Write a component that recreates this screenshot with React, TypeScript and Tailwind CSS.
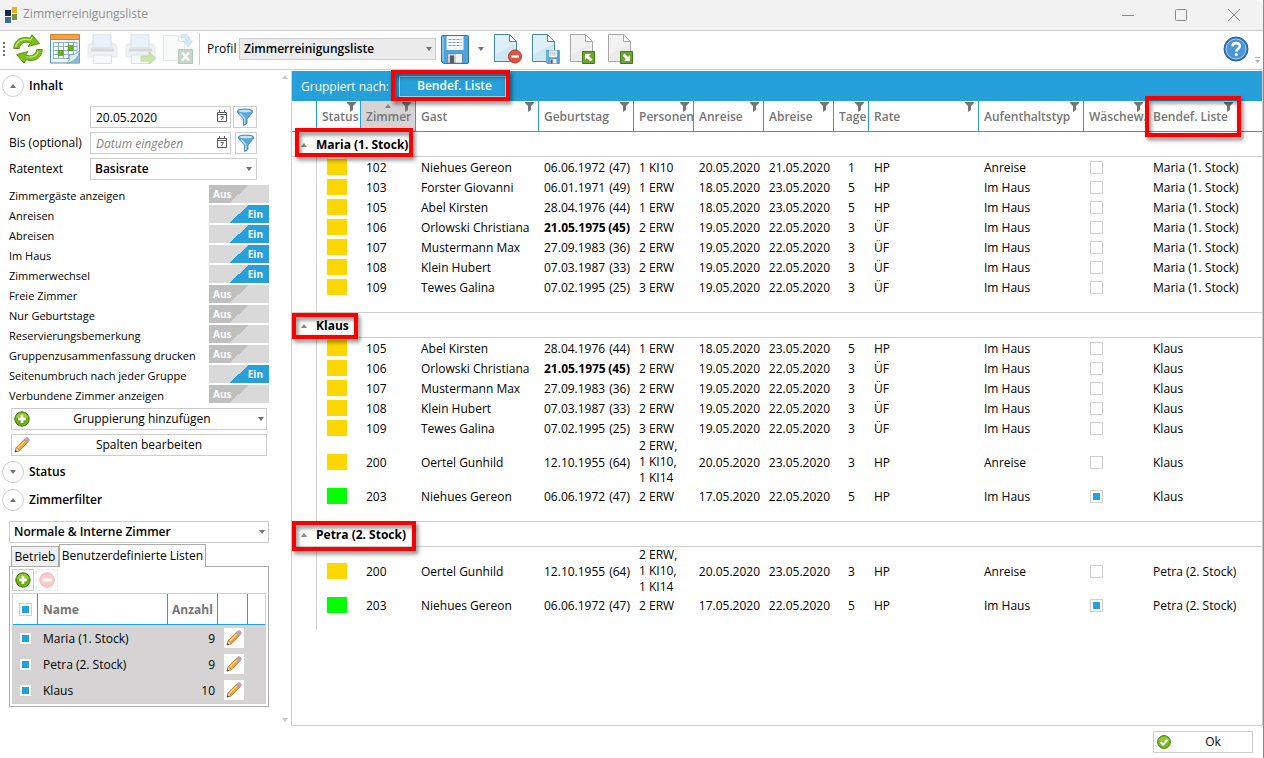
import type { ReactNode } from "react";

type Row = {
  room: string;
  guest: string;
  birth: string;
  age: string;
  persons: string;
  from: string;
  to: string;
  days: number;
  rate: string;
  type: string;
  green?: boolean;
  birthday?: boolean;
};

const oertel: Row = { room: "200", guest: "Oertel Gunhild", birth: "12.10.1955", age: "(64)", persons: "2 ERW,\n1 KI10,\n1 KI14", from: "20.05.2020", to: "23.05.2020", days: 3, rate: "HP", type: "Anreise" };
const niehues203: Row = { room: "203", guest: "Niehues Gereon", birth: "06.06.1972", age: "(47)", persons: "2 ERW", from: "17.05.2020", to: "22.05.2020", days: 5, rate: "HP", type: "Im Haus", green: true };
const shared: Row[] = [
  { room: "105", guest: "Abel Kirsten", birth: "28.04.1976", age: "(44)", persons: "1 ERW", from: "18.05.2020", to: "23.05.2020", days: 5, rate: "HP", type: "Im Haus" },
  { room: "106", guest: "Orlowski Christiana", birth: "21.05.1975", age: "(45)", persons: "2 ERW", from: "19.05.2020", to: "22.05.2020", days: 3, rate: "ÜF", type: "Im Haus", birthday: true },
  { room: "107", guest: "Mustermann Max", birth: "27.09.1983", age: "(36)", persons: "2 ERW", from: "19.05.2020", to: "22.05.2020", days: 3, rate: "ÜF", type: "Im Haus" },
  { room: "108", guest: "Klein Hubert", birth: "07.03.1987", age: "(33)", persons: "2 ERW", from: "19.05.2020", to: "22.05.2020", days: 3, rate: "ÜF", type: "Im Haus" },
  { room: "109", guest: "Tewes Galina", birth: "07.02.1995", age: "(25)", persons: "3 ERW", from: "19.05.2020", to: "22.05.2020", days: 3, rate: "ÜF", type: "Im Haus" },
];

const groups = [
  {
    name: "Maria (1. Stock)",
    marker: "left-[3px] -top-1 w-[118px] h-[29px]",
    rows: [
      { room: "102", guest: "Niehues Gereon", birth: "06.06.1972", age: "(47)", persons: "1 KI10", from: "20.05.2020", to: "21.05.2020", days: 1, rate: "HP", type: "Anreise" },
      { room: "103", guest: "Forster Giovanni", birth: "06.01.1971", age: "(49)", persons: "1 ERW", from: "18.05.2020", to: "23.05.2020", days: 5, rate: "HP", type: "Im Haus" },
      ...shared,
    ] as Row[],
  },
  { name: "Klaus", marker: "left-0 top-0 w-[66px] h-[26px]", rows: [...shared, oertel, niehues203] },
  { name: "Petra (2. Stock)", marker: "left-0 -top-px w-[124px] h-[30px]", rows: [oertel, niehues203] },
];

const columns = [
  { label: "", col: "w-[25px]" },
  { label: "Status", col: "w-[44px]" },
  { label: "Zimmer", col: "w-[55px]" },
  { label: "Gast", col: "w-[123px]" },
  { label: "Geburtstag", col: "w-[95px]" },
  { label: "Personen", col: "w-[60px]" },
  { label: "Anreise", col: "w-[70px]" },
  { label: "Abreise", col: "w-[70px]" },
  { label: "Tage", col: "w-[35px]" },
  { label: "Rate", col: "w-[110px]" },
  { label: "Aufenthaltstyp", col: "w-[105px]" },
  { label: "Wäschew.", col: "w-[64px]" },
  { label: "Bendef. Liste", col: "" },
];

const switches = [
  { label: "Zimmergäste anzeigen", on: false },
  { label: "Anreisen", on: true },
  { label: "Abreisen", on: true },
  { label: "Im Haus", on: true },
  { label: "Zimmerwechsel", on: true },
  { label: "Freie Zimmer", on: false },
  { label: "Nur Geburtstage", on: false },
  { label: "Reservierungsbemerkung", on: false },
  { label: "Gruppenzusammenfassung drucken", on: false },
  { label: "Seitenumbruch nach jeder Gruppe", on: true },
  { label: "Verbundene Zimmer anzeigen", on: false },
];

const lists = [
  { name: "Maria (1. Stock)", count: 9 },
  { name: "Petra (2. Stock)", count: 9 },
  { name: "Klaus", count: 10 },
];

function Marker({ className }: { className: string }) {
  return <span className={"pointer-events-none absolute z-10 border-4 border-[#fb0000] drop-shadow-[2px_3px_2px_rgba(0,0,0,0.5)] " + className} />;
}

function Tri({ down, className = "text-[#707070]" }: { down?: boolean; className?: string }) {
  return (
    <svg className={"h-1 w-1.5 shrink-0 " + className} viewBox="0 0 6 4" fill="currentColor">
      <path d={down ? "M0 0h6L3 4z" : "M0 4h6L3 0z"} />
    </svg>
  );
}

function Check({ label, checked }: { label: string; checked?: boolean }) {
  return (
    <input
      type="checkbox"
      aria-label={label}
      defaultChecked={checked}
      className="block size-[13px] appearance-none border border-[#d0d0d0] bg-white checked:bg-[#26a0da] checked:shadow-[inset_0_0_0_2px_#fff]"
    />
  );
}

function HeaderFilter() {
  return (
    <svg className="absolute right-1 top-0 h-[11px] w-[9px]" viewBox="0 0 9 11" fill="#757575">
      <path d="M0 1h9v1L6 5v4l-3 2V5L0 2z" />
    </svg>
  );
}

function BlueFunnel() {
  return (
    <svg className="size-[18px]" viewBox="0 0 18 18">
      <path d="M1.500 3c0-2.600 15-2.600 15 0v1.600L11 11v4.500L7.500 17.500V11l-6-6.400z" fill="#5ea8dc" stroke="#2d7cb8" strokeWidth=".8" />
      <ellipse cx="9" cy="3" rx="6.400" ry="1.300" fill="#c8e5f7" />
      <path d="M4 5.500L8.700 10.500v5.500" fill="none" stroke="#bfe0f5" strokeWidth="1.200" />
    </svg>
  );
}

function DateGlyph() {
  return (
    <svg className="absolute right-1 top-1 h-3 w-2.5" viewBox="0 0 10 12" fill="none" stroke="#5c5c5c">
      <path d="M.5 2.500h9v9h-9zM.5 4.500h9M2.500 0v3M7.500 0v3" />
      <path d="M3.500 6.500h3L4.500 10" />
    </svg>
  );
}

function Plus() {
  return (
    <svg className="size-4" viewBox="0 0 16 16">
      <circle cx="8" cy="8" r="7.200" fill="#6eae12" stroke="#3f7a0b" />
      <path d="M2 7a6 5 0 0 1 12 0z" fill="#a5d64c" opacity=".7" />
      <path d="M8 4v8M4 8h8" stroke="#fff" strokeWidth="2.600" />
    </svg>
  );
}

function Minus() {
  return (
    <svg className="size-4 opacity-40" viewBox="0 0 16 16">
      <circle cx="8" cy="8" r="7.300" fill="#ee7f74" stroke="#d3584c" />
      <path d="M3.500 8h9" stroke="#fff" strokeWidth="3" />
    </svg>
  );
}

function Pencil() {
  return (
    <svg className="size-4" viewBox="0 0 16 16">
      <path d="M1 15l1.300-4.500L10.500 2.300l3.200 3.200L5.500 13.700z" fill="#f3a234" stroke="#a8671b" strokeWidth=".7" />
      <path d="M3.300 11.500L11.500 3.300" stroke="#ffd98a" strokeWidth="1.200" />
      <path d="M1 15l1.300-4.500 3.200 3.200z" fill="#f5dcb3" stroke="#8a6a45" strokeWidth=".6" />
      <path d="M1 15l.6-2 1.400 1.400z" fill="#333" />
      <path d="M10 2.800l1-1 3.200 3.200-1 1z" fill="#b8bcc4" stroke="#80848c" strokeWidth=".5" />
      <path d="M11.300 1.600l.7-.7q1-.8 2 .1l1 1q.8 1 0 1.900l-.7.700z" fill="#dc9fc4" stroke="#a56a92" strokeWidth=".5" />
    </svg>
  );
}

function RefreshIcon() {
  return (
    <svg className="h-[30px] w-[30px]" viewBox="0 0 30 30" fill="#7fbf1a" stroke="#4f8a10" strokeWidth=".9" strokeLinejoin="round">
      <path d="M.8 14.500C1 6.500 8 1.500 17 4.200L19 .8l7.500 8.700-11.300 3 2.300-3.600C11.500 7 7.500 9 6.300 14.500z" />
      <path d="M29.300 15.500c-.2 8-7.200 13-16.200 10.300L11 29.200 3.600 20.500l11.300-3-2.300 3.600c6 1.900 10-.1 11.200-5.600z" />
      <path d="M2.500 13C4 7 9.500 4 17.500 6l1.800-3" fill="none" stroke="#cdea7e" strokeWidth="1.200" />
      <path d="M25.500 17c-1.500 5-6 7-12 5.500" fill="none" stroke="#c2e56a" strokeWidth="1.200" />
    </svg>
  );
}

function CalendarIcon() {
  return (
    <svg className="size-[30px]" viewBox="0 0 30 30">
      <path d="M.5 1h29v28H.5z" fill="#eff7fc" stroke="#4d93c4" />
      <path d="M.5.500h29v5H.500z" fill="#f5a04b" stroke="#dc7d22" />
      <path d="M3 8h24v18H3z" fill="#fff" />
      <path d="M3 8.500h24M3 12.500h24M3 16.500h24M3 20.500h24M3 24.500h17M3.500 8v17M8.500 8v17M13.500 8v17M18.500 8v17M23.500 8v13M27 8v12" stroke="#7fa9c6" strokeWidth=".9" />
      <path d="M18 11.500h5v5h-5zM8 16.500h5v5H8z" fill="#6db50f" stroke="#4f8a10" strokeWidth=".6" />
      <path d="M17 29.500L29.500 17v12.500z" fill="#8ab8d8" />
      <path d="M17 29.500q4-4 2.500-8.500 5 1 10-4-1 9-12.500 12.500z" fill="#dff0fb" stroke="#6ba3cb" strokeWidth=".7" />
    </svg>
  );
}

function PrinterIcon({ arrow }: { arrow?: boolean }) {
  return (
    <svg className="h-[30px] w-[31px] opacity-45" viewBox="0 0 31 30">
      <path d="M2 10h3V8h20v2h3l2 3v10H1V13z" fill="#dfe1e3" stroke="#c8cbce" />
      <path d="M6 .8h18v13H6z" fill="#cfe3f4" stroke="#9cc0dd" />
      <path d="M4 14.500h23v3H4z" fill="#a4a9ae" />
      <path d="M6.500 21h18v8.500h-18z" fill="#edf5fb" stroke="#9cc0dd" />
      {arrow && <path d="M16 22h8v-4l7 6.500-7 6V27h-8z" fill="#8cc63a" stroke="#6aa321" strokeWidth=".8" />}
    </svg>
  );
}

function ExcelIcon() {
  return (
    <svg className="size-[30px] opacity-45" viewBox="0 0 30 30">
      <path d="M.5 1.500h15l6 6v19H.500z" fill="#f1f2f3" stroke="#cfd2d5" />
      <path d="M15.500 1.500v6h6" fill="none" stroke="#bfc3c6" />
      <path d="M18 1c6-2 9 1 9 6h2.500L25 13l-4.500-6H23c0-3-1-4-5-3.500z" fill="#a5cbe9" stroke="#72a9d3" strokeWidth=".6" />
      <path d="M15.500 15.500h14v14h-14z" fill="#7ea889" stroke="#5c8a69" />
      <path d="M19 18.500l7 8M26 18.500l-7 8" stroke="#fff" strokeWidth="2.600" />
    </svg>
  );
}

function DiskArt() {
  return (
    <>
      <path d="M.5 1.500q0-1 1-1h25q1 0 1 1v26q0 1-1 1h-24l-2-2z" fill="#4fa3dc" stroke="#2b76b2" />
      <path d="M2 2v24" stroke="#9dd0f1" strokeWidth="1.300" />
      <path d="M5.500 1h17v14h-17z" fill="#f2f6f9" />
      <path d="M7.500 4.500h13M7.500 7.500h13M7.500 10.500h13" stroke="#8b99a5" strokeWidth="1.200" strokeDasharray="3 1" />
      <path d="M6.500 18.500h15v9.500h-15z" fill="#c9d0d6" stroke="#6b8296" strokeWidth=".8" />
      <path d="M9 20.500h4v7.500H9z" fill="#555e67" />
      <path d="M15 19h6v8.500h-6z" fill="#eef2f5" />
    </>
  );
}

function DiskIcon() {
  return (
    <svg className="h-[29px] w-7" viewBox="0 0 28 29">
      <DiskArt />
    </svg>
  );
}

function PageIcon({ kind }: { kind: "remove" | "save" | "up" | "down" }) {
  const blue = kind === "remove" || kind === "save";
  return (
    <svg className="h-[30px] w-[29px]" viewBox="0 0 29 30">
      <path d="M1.500.500h15l7 7v20h-22z" fill={blue ? "#e0f0fa" : "#f2f2f2"} stroke={blue ? "#3d87bb" : "#a5a5a5"} />
      <path d="M16.500.500v7h7z" fill="#fff" stroke={blue ? "#3d87bb" : "#a5a5a5"} />
      <path d="M3 20L22 10v16.500H3z" fill={blue ? "#c3e0f2" : "#e4e4e4"} opacity=".6" />
      {kind === "remove" && (
        <>
          <circle cx="22" cy="22.500" r="6.500" fill="#e2523f" stroke="#b93424" />
          <path d="M18 22.500h8" stroke="#fff" strokeWidth="2.400" />
        </>
      )}
      {kind === "save" && (
        <svg x="15" y="16" width="14" height="14" viewBox="0 0 28 29">
          <DiskArt />
        </svg>
      )}
      {!blue && <path d="M13.500 17.500h12v12h-12z" fill="#69a52c" stroke="#3f7a17" />}
      {kind === "up" && <path d="M16 20h6l-2 2 3.500 3.500-2 2L18 24l-2 2z" fill="#fff" />}
      {kind === "down" && <path d="M23 27h-6l2-2-3.500-3.500 2-2L21 23l2-2z" fill="#fff" />}
    </svg>
  );
}

function ToolButton({ label, children }: { label: string; children: ReactNode }) {
  return <button aria-label={label} className="flex shrink-0">{children}</button>;
}

function SectionHead({ title, closed }: { title: string; closed?: boolean }) {
  return (
    <h2 className="flex items-center gap-[5px] pl-0.5 font-semibold">
      <button aria-label={title} className="flex size-[22px] items-center justify-center rounded-full border border-[#cfcfcf]">
        <Tri down={closed} />
      </button>
      {title}
    </h2>
  );
}

function Sidebar() {
  return (
    <aside className="flex w-[281px] shrink-0 flex-col">
      <div className="pt-1">
        <SectionHead title="Inhalt" />
      </div>
      <div className="mt-[9px] flex flex-col gap-1 pl-[9px]">
        <div className="flex h-[22px] items-center">
          <label htmlFor="von" className="w-[81px]">Von</label>
          <div className="relative w-[141px]">
            <input id="von" defaultValue="20.05.2020" className="block h-[22px] w-full border border-[#cdcdcd] px-[5px]" />
            <DateGlyph />
          </div>
          <button aria-label="Filter Von" className="ml-0.5 flex h-[22px] w-6 items-center justify-center border border-[#cdcdcd]"><BlueFunnel /></button>
        </div>
        <div className="flex h-[22px] items-center">
          <label htmlFor="bis" className="w-[81px]">Bis (optional)</label>
          <div className="relative w-[141px]">
            <input id="bis" placeholder="Datum eingeben" className="block h-[22px] w-full border border-[#cdcdcd] px-[5px] placeholder:italic placeholder:text-[#858585]" />
            <DateGlyph />
          </div>
          <button aria-label="Filter Bis" className="ml-1 flex size-[22px] items-center justify-center border border-[#cdcdcd]"><BlueFunnel /></button>
        </div>
        <div className="flex h-[22px] items-center">
          <label htmlFor="rate" className="w-[81px]">Ratentext</label>
          <div className="relative flex w-[167px] items-center">
            <select id="rate" className="h-[22px] w-full appearance-none border border-[#cdcdcd] px-1 font-semibold">
              <option>Basisrate</option>
            </select>
            <Tri down className="absolute right-[5px] text-[#707070]" />
          </div>
        </div>
      </div>
      <div className="mt-[5px] pl-[9px]">
        {switches.map((s) => (
          <label key={s.label} className="flex h-5 items-start justify-between pr-3">
            <span className="whitespace-nowrap pt-[3px] text-[11px]">{s.label}</span>
            <span className="relative h-[18px] w-[60px] shrink-0 text-[10px] font-bold leading-[18px] text-white">
              <input
                type="checkbox"
                defaultChecked={s.on}
                className="block h-[18px] w-[60px] appearance-none bg-[linear-gradient(138deg,#bfbfbf_50%,#d9d9d9_50%)] checked:bg-[linear-gradient(138deg,#d9d9d9_50%,#26a0da_50%)]"
              />
              <span className={s.on ? "absolute right-1.5 top-0" : "absolute left-1 top-0"}>{s.on ? "Ein" : "Aus"}</span>
            </span>
          </label>
        ))}
      </div>
      <div className="mt-[3px] flex flex-col gap-1 pl-[11px] pr-3.5">
        <button className="flex h-[22px] items-center border border-[#cdcdcd] px-[2px]">
          <Plus />
          <span className="flex-1 pr-1">Gruppierung hinzufügen</span>
          <Tri down />
        </button>
        <button className="flex h-[22px] items-center border border-[#cdcdcd] px-[2px]">
          <Pencil />
          <span className="flex-1 pl-1">Spalten bearbeiten</span>
        </button>
      </div>
      <div className="mt-[5px] flex flex-col gap-1.5">
        <SectionHead title="Status" closed />
        <SectionHead title="Zimmerfilter" />
      </div>
      <div className="mt-2.5 pl-[9px] pr-3">
        <div className="relative flex items-center">
          <select aria-label="Zimmerfilter" className="h-[22px] w-full appearance-none border border-[#cdcdcd] px-1 font-semibold">
            <option>Normale &amp; Interne Zimmer</option>
          </select>
          <Tri down className="absolute right-1 text-[#707070]" />
        </div>
        <div className="mt-px flex items-end pl-0.5" role="tablist">
          <button role="tab" className="h-5 w-12 border border-b-0 border-[#acacac] bg-[#f0f0f0]">Betrieb</button>
          <button role="tab" aria-selected className="relative -mb-px h-[23px] w-[147px] whitespace-nowrap border border-b-0 border-[#acacac] bg-white">Benutzerdefinierte Listen</button>
        </div>
        <div className="border border-[#acacac] p-0.5">
          <div className="flex gap-0.5">
            <button aria-label="Liste hinzufügen" className="flex size-[22px] items-center justify-center border border-[#cdcdcd]"><Plus /></button>
            <button aria-label="Liste entfernen" disabled className="flex size-[22px] items-center justify-center border border-[#eeeeee]"><Minus /></button>
          </div>
          <table className="mt-0.5 w-full table-fixed border-separate border-spacing-0 border border-[#d0d0d0]">
            <thead>
              <tr className="h-[31px] text-left text-[#757575]">
                <th className="w-[25px] border-b border-r border-[#26a0da] pl-1.5"><Check label="Alle Listen" checked /></th>
                <th className="w-[130px] border-b border-r border-[#26a0da] pl-[5px] pt-0.5">Name</th>
                <th className="w-[50px] border-b border-r border-[#26a0da] pl-1 pt-0.5">Anzahl</th>
                <th className="w-[30px] border-b border-r border-[#26a0da]" />
                <th className="border-b border-[#26a0da]" />
              </tr>
            </thead>
            <tbody className="bg-[#d5d3d4]">
              {lists.map((l) => (
                <tr key={l.name} className="h-[26px]">
                  <td className="pl-1.5"><Check label={l.name} checked /></td>
                  <td className="pl-[5px] pt-0.5">{l.name}</td>
                  <td className="pr-[3px] pt-0.5 text-right">{l.count}</td>
                  <td className="pl-1.5">
                    <button aria-label={l.name + " bearbeiten"} className="flex size-5 items-center justify-center bg-white"><Pencil /></button>
                  </td>
                  <td />
                </tr>
              ))}
            </tbody>
          </table>
        </div>
      </div>
    </aside>
  );
}

function Grid() {
  return (
    <section className="flex min-w-0 flex-1 flex-col border-b border-x border-[#cdcdcd]">
      <div className="flex h-[30px] items-center bg-[#26a0da] pl-[9px] text-white">
        <span className="w-[98px] pt-0.5">Gruppiert nach:</span>
        <div className="relative">
          <button className="block h-[21px] w-[107px] border border-[#a8d9f0] pl-1 font-semibold">Bendef. Liste</button>
          <Marker className="-left-2 -right-1 -top-1.5 -bottom-1" />
        </div>
      </div>
      <table className="w-full table-fixed border-separate border-spacing-0">
        <colgroup>
          {columns.map((c, i) => <col key={i} className={c.col} />)}
        </colgroup>
        <thead>
          <tr className="h-[31px] text-left text-[#757575]">
            {columns.map((c, i) => (
              <th key={i} className={"relative whitespace-nowrap border-b border-[#26a0da] p-0 pl-[5px] pt-0.5 font-semibold" + (i < 12 ? " border-r" : "") + (c.label === "Zimmer" ? " bg-[#d5d3d4]" : "")}>
                {c.label === "Zimmer" && <Tri className="absolute left-6 top-[3px] text-[#858585]" />}
                {c.label && i < 12 && <HeaderFilter />}
                {i === 12 ? (
                  <span className="relative inline-block w-20">
                    {c.label}
                    <span className="absolute -right-1 -top-2 size-3"><HeaderFilter /></span>
                    <Marker className="-left-2 -top-[13px] h-[41px] w-24" />
                  </span>
                ) : (
                  <span className="block overflow-hidden">{c.label}</span>
                )}
              </th>
            ))}
          </tr>
        </thead>
        {groups.map((g, gi) => (
          <tbody key={g.name}>
            <tr className={gi ? "h-[26px]" : "h-[25px]"}>
              <th colSpan={13} className={"relative border-b border-[#d0d0d0] p-0 pt-0.5 text-left font-bold" + (gi ? " border-t" : "")}>
                <span className="flex items-center gap-[9px] pl-[9px]">
                  <Tri className="text-[#858585]" />
                  <span>{g.name}</span>
                </span>
                <Marker className={g.marker} />
              </th>
            </tr>
            {g.rows.map((r) => (
              <tr key={r.room} className="h-5">
                <td className="border-r border-[#d0d0d0] p-0" />
                <td className="p-0 pl-2.5"><div className={r.green ? "h-4 w-5 bg-[#00ff00]" : "h-4 w-5 bg-[#ffd700]"} /></td>
                <td className="p-0 pl-[5px] pt-0.5">{r.room}</td>
                <td className="whitespace-nowrap p-0 pl-[5px] pt-0.5">{r.guest}</td>
                <td className={"p-0 pl-[5px] pr-1 pt-0.5" + (r.birthday ? " font-bold" : "")}>
                  <div className="flex justify-between"><span>{r.birth}</span><span>{r.age}</span></div>
                </td>
                <td className={"whitespace-pre p-0 pl-[5px]" + (r.persons.includes("\n") ? "" : " pt-0.5")}>{r.persons}</td>
                <td className="p-0 pr-1 pt-0.5 text-right">{r.from}</td>
                <td className="p-0 pr-1 pt-0.5 text-right">{r.to}</td>
                <td className="p-0 pt-0.5 text-center">{r.days}</td>
                <td className="p-0 pl-[5px] pt-0.5">{r.rate}</td>
                <td className="p-0 pl-[5px] pt-0.5">{r.type}</td>
                <td className="p-0 pl-1.5"><Check label={"Wäschewechsel " + r.room} checked={r.green} /></td>
                <td className="p-0 pl-[5px] pt-0.5">{g.name}</td>
              </tr>
            ))}
            <tr className="h-[15px]">
              <td className="border-r border-[#d0d0d0] p-0" />
              <td colSpan={12} className="p-0" />
            </tr>
          </tbody>
        ))}
      </table>
    </section>
  );
}

export default function App() {
  return (
    <div className="flex min-h-screen flex-col border-r border-[#8a8a8a] bg-white font-['Open_Sans','Noto_Sans',sans-serif] text-xs leading-4 text-black">
      <header className="flex h-[31px] items-center rounded-tr-lg border-b border-[#cdcdcd] bg-[#f2f2f2] pl-[5px]">
        <svg className="h-4 w-3" viewBox="0 0 12 16">
          <path d="M0 3h6v6H0z" fill="#12284b" />
          <path d="M7 0h5v6H7z" fill="#e8b12b" />
          <path d="M0 10h6v6H0z" fill="#3f6d96" />
          <path d="M7 7h5v6H7z" fill="#7b9145" />
        </svg>
        <h1 className="flex-1 pb-0.5 pl-1.5 text-[#8f8f8f]">Zimmerreinigungsliste</h1>
        <div className="flex items-center gap-[41px] pr-[23px]">
          <button aria-label="Minimieren"><svg className="size-3" viewBox="0 0 12 12" stroke="#8a8a8a"><path d="M0 6.500h12" /></svg></button>
          <button aria-label="Maximieren"><svg className="size-3" viewBox="0 0 12 12" fill="none" stroke="#8a8a8a"><rect x=".5" y=".5" width="11" height="11" rx="1" /></svg></button>
          <button aria-label="Schließen"><svg className="size-3" viewBox="0 0 12 12" stroke="#8a8a8a"><path d="M0 0l12 12M12 0L0 12" /></svg></button>
        </div>
      </header>
      <div className="flex h-[39px] items-center border-b border-[#cdcdcd] pb-0.5 pl-[3px]">
        <svg className="mr-2 h-4 w-0.5 shrink-0" viewBox="0 0 2 16" fill="#6a6a6a"><path d="M0 1h2v2H0zM0 5h2v2H0zM0 9h2v2H0zM0 13h2v2H0z" /></svg>
        <div className="flex gap-[7px]">
          <ToolButton label="Aktualisieren"><RefreshIcon /></ToolButton>
          <ToolButton label="Kalender"><CalendarIcon /></ToolButton>
          <ToolButton label="Drucken"><PrinterIcon /></ToolButton>
          <ToolButton label="Direkt drucken"><PrinterIcon arrow /></ToolButton>
          <ToolButton label="Excel-Export"><ExcelIcon /></ToolButton>
        </div>
        <span className="ml-1.5 h-8 w-px bg-[#cdcdcd]" />
        <label htmlFor="profil" className="ml-[7px] w-8">Profil</label>
        <div className="relative flex w-[197px] items-center">
          <select id="profil" className="h-[22px] w-full appearance-none border border-[#cdcdcd] bg-[#ececec] px-1 font-semibold">
            <option>Zimmerreinigungsliste</option>
          </select>
          <Tri down className="absolute right-1 text-[#707070]" />
        </div>
        <div className="flex items-center gap-[9px] pl-[5px]">
          <ToolButton label="Profil speichern"><DiskIcon /></ToolButton>
          <Tri down />
          <div className="flex gap-[9px]">
            <ToolButton label="Profil löschen"><PageIcon kind="remove" /></ToolButton>
            <ToolButton label="Profil speichern unter"><PageIcon kind="save" /></ToolButton>
            <ToolButton label="Profil exportieren"><PageIcon kind="up" /></ToolButton>
            <ToolButton label="Profil importieren"><PageIcon kind="down" /></ToolButton>
          </div>
        </div>
        <button aria-label="Hilfe" className="ml-auto mr-1.5">
          <svg className="size-[26px]" viewBox="0 0 26 26">
            <circle cx="13" cy="13" r="12" fill="#3079bf" stroke="#235f9c" />
            <circle cx="13" cy="13" r="10" fill="#4b94d6" stroke="#a9d0f0" />
            <path d="M9.500 10.300c.3-4.300 7.300-4.200 7.300-.2 0 2.600-3.400 2.600-3.400 5.300" fill="none" stroke="#fff" strokeWidth="2.600" />
            <circle cx="13.300" cy="18.600" r="1.600" fill="#fff" />
          </svg>
        </button>
        <svg className="mb-1 mr-[3px] h-1.5 w-[5px] self-end" viewBox="0 0 5 6" fill="#b0b0b0"><path d="M0 0h5v1H0zM0 3h5L2.500 6z" /></svg>
      </div>
      <main className="flex flex-1 pt-px">
        <Sidebar />
        <div className="flex w-2.5 shrink-0 flex-col items-start justify-between py-1 pl-px">
          <Tri className="text-[#c8c8c8]" />
          <Tri down className="text-[#c8c8c8]" />
        </div>
        <Grid />
      </main>
      <footer className="flex h-8 items-center justify-end pr-2.5">
        <button className="flex h-[22px] w-[100px] items-center border border-[#cdcdcd] px-[3px]">
          <svg className="size-3.5" viewBox="0 0 16 16">
            <circle cx="8" cy="8" r="7.400" fill="#76b51c" stroke="#3f7a0b" />
            <path d="M2 7a6 5 0 0 1 12 0z" fill="#a5d64c" opacity=".6" />
            <path d="M4 8l3 3 5-5.500" fill="none" stroke="#fff" strokeWidth="2.400" />
          </svg>
          <span className="flex-1 pl-1.5">Ok</span>
        </button>
      </footer>
    </div>
  );
}
